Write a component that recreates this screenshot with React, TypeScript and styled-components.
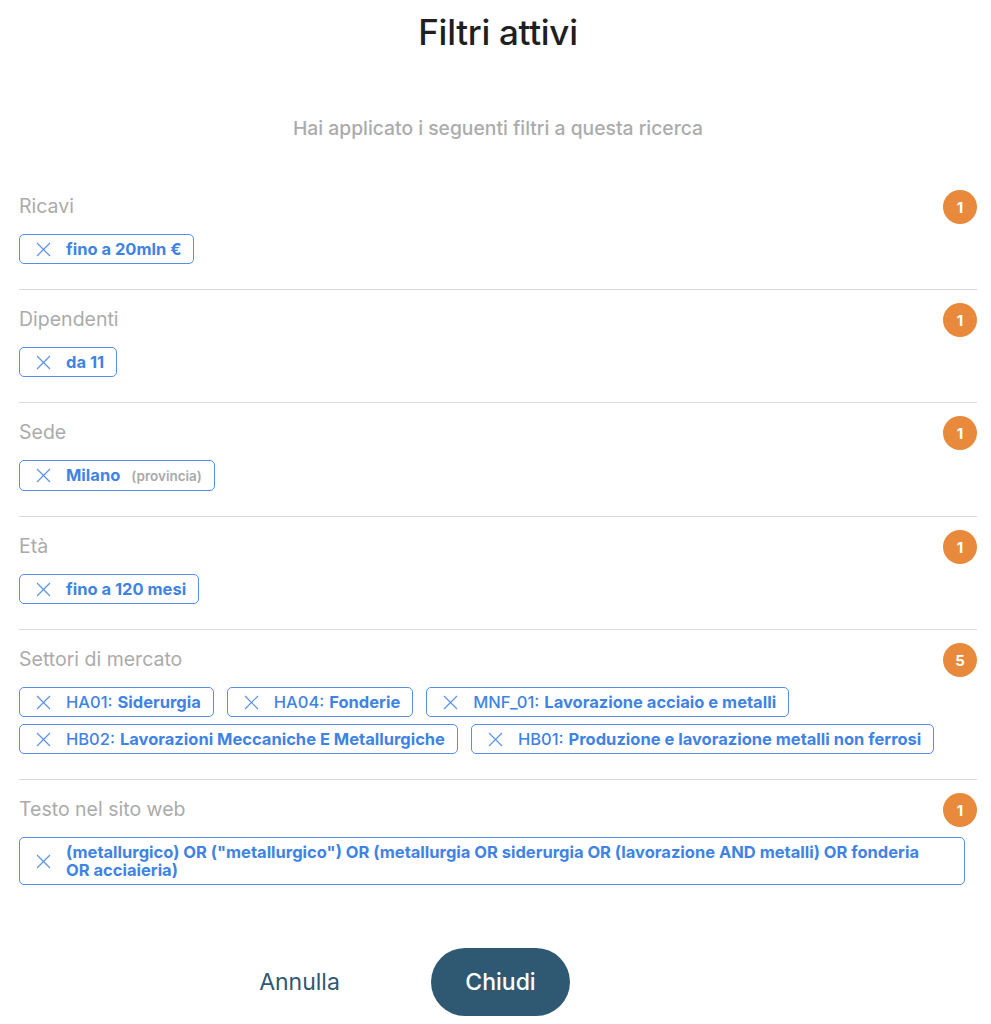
import styled, { createGlobalStyle } from 'styled-components';

const GlobalStyle = createGlobalStyle`
  body {
    margin: 0;
    background: #ffffff;
    font-family: Inter, 'Noto Sans', sans-serif;
  }
`;

type Chip = { code?: string; label: string; note?: string; wide?: boolean };
type Section = { title: string; chips: Chip[] };

const sections: Section[] = [
  { title: 'Ricavi', chips: [{ label: 'fino a 20mln €' }] },
  { title: 'Dipendenti', chips: [{ label: 'da 11' }] },
  { title: 'Sede', chips: [{ label: 'Milano', note: '(provincia)' }] },
  { title: 'Età', chips: [{ label: 'fino a 120 mesi' }] },
  {
    title: 'Settori di mercato',
    chips: [
      { code: 'HA01:', label: 'Siderurgia' },
      { code: 'HA04:', label: 'Fonderie' },
      { code: 'MNF_01:', label: 'Lavorazione acciaio e metalli' },
      { code: 'HB02:', label: 'Lavorazioni Meccaniche E Metallurgiche' },
      { code: 'HB01:', label: 'Produzione e lavorazione metalli non ferrosi' },
    ],
  },
  {
    title: 'Testo nel sito web',
    chips: [
      {
        label:
          '(metallurgico) OR ("metallurgico") OR (metallurgia OR siderurgia OR (lavorazione AND metalli) OR fonderia OR acciaieria)',
        wide: true,
      },
    ],
  },
];

const Page = styled.div`
  padding: 12px 14px 8px 19px;
  color: #222;
`;

const Title = styled.h1`
  margin: 0;
  text-align: center;
  font-size: 35px;
  line-height: 40px;
  font-weight: 500;
  color: #1f1f1f;
  letter-spacing: -0.3px;
`;

const Subtitle = styled.p`
  margin: 65px 0 51px;
  text-align: center;
  font-size: 19.3px;
  line-height: 22px;
  font-weight: 500;
  color: #ababab;
`;

const Block = styled.section<{ last?: boolean }>`
  padding: 13px 0 ${({ last }) => (last ? '0' : '25px')};
  border-bottom: ${({ last }) => (last ? 'none' : '1px solid #d9d9d9')};
  &:first-child {
    padding-top: 0;
  }
`;

const BlockHead = styled.div`
  display: flex;
  align-items: center;
  justify-content: space-between;
  height: 34px;
`;

const BlockTitle = styled.h2`
  margin: 0;
  font-size: 19.5px;
  font-weight: 400;
  color: #ababab;
  position: relative;
  top: -1px;
`;

const Count = styled.span`
  width: 34px;
  height: 34px;
  border-radius: 50%;
  background: #e8893b;
  color: #fff;
  font-size: 15px;
  font-weight: 700;
  display: flex;
  align-items: center;
  justify-content: center;
`;

const ChipList = styled.div`
  display: flex;
  flex-wrap: wrap;
  gap: 7px 13px;
  margin-top: 10px;
`;

const ChipBox = styled.div<{ wide?: boolean }>`
  display: inline-flex;
  align-items: center;
  gap: 15px;
  min-height: 30px;
  box-sizing: border-box;
  padding: 5px ${({ wide }) => (wide ? '32px' : '12px')} 5px 16px;
  border: 1px solid #5490e8;
  border-radius: 5px;
  max-width: 946px;
`;

const Remove = styled.svg`
  flex: none;
  width: 15px;
  height: 15px;
  color: #5b93e8;
`;

const ChipText = styled.span`
  font-size: 16.5px;
  line-height: 18px;
  font-weight: 700;
  color: #3f83e4;
`;

const Code = styled.span`
  font-weight: 500;
  margin-right: 5px;
`;

const Note = styled.span`
  font-size: 13.5px;
  font-weight: 600;
  color: #a9a9a9;
  margin-left: 11px;
`;

const Footer = styled.div`
  display: flex;
  justify-content: center;
  align-items: center;
  gap: 62px;
  margin-top: 63px;
  padding-right: 196px;
`;

const Button = styled.button<{ primary?: boolean }>`
  width: 139px;
  height: 68px;
  border: none;
  border-radius: 34px;
  background: ${({ primary }) => (primary ? '#2f5872' : 'transparent')};
  color: ${({ primary }) => (primary ? '#ffffff' : '#2f5872')};
  font-family: inherit;
  font-size: 23px;
  font-weight: ${({ primary }) => (primary ? 500 : 400)};
  cursor: pointer;
`;

const XIcon = () => (
  <Remove viewBox="0 0 15 15" fill="none" stroke="currentColor" strokeWidth="1.2">
    <path d="M1 1 L14 14 M14 1 L1 14" />
  </Remove>
);

export default function App() {
  return (
    <Page>
      <GlobalStyle />
      <Title>Filtri attivi</Title>
      <Subtitle>Hai applicato i seguenti filtri a questa ricerca</Subtitle>
      <div>
        {sections.map((s, i) => (
          <Block key={s.title} last={i === sections.length - 1}>
            <BlockHead>
              <BlockTitle>{s.title}</BlockTitle>
              <Count>{s.chips.length}</Count>
            </BlockHead>
            <ChipList>
              {s.chips.map(c => (
                <ChipBox key={c.label} wide={c.wide}>
                  <XIcon />
                  <ChipText>
                    {c.code && <Code>{c.code}</Code>}
                    {c.label}
                    {c.note && <Note>{c.note}</Note>}
                  </ChipText>
                </ChipBox>
              ))}
            </ChipList>
          </Block>
        ))}
      </div>
      <Footer>
        <Button>Annulla</Button>
        <Button primary>Chiudi</Button>
      </Footer>
    </Page>
  );
}
